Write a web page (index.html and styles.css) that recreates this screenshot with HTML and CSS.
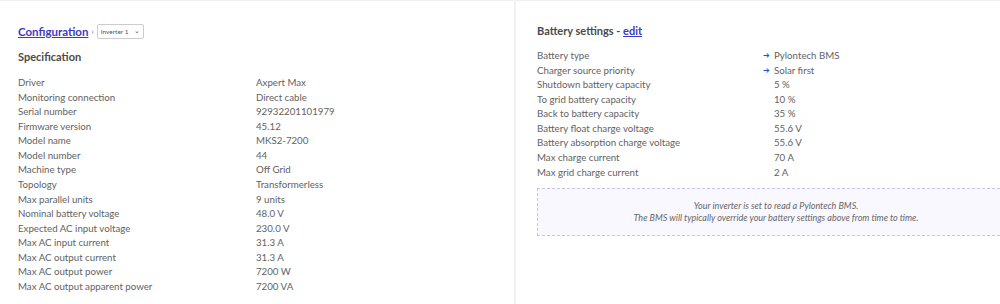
FILE: index.html
```html
<!DOCTYPE html>
<html lang="en">
<head>
    <meta charset="UTF-8">
    <title>Configuration</title>
    <link rel="stylesheet" href="styles.css">
</head>
<body>
    <div class="page">
        <!-- Left panel: inverter specification -->
        <section class="panel panel-left">
            <div class="crumbs">
                <a href="#" class="crumb-link">Configuration</a>
                <span class="crumb-sep">›</span>
                <div class="select">Inverter 1 <span class="caret">⌄</span></div>
            </div>
            <h2 class="panel-title">Specification</h2>
            <div class="spec-table">
                <div class="row"><span class="label">Driver</span><span class="value">Axpert Max</span></div>
                <div class="row"><span class="label">Monitoring connection</span><span class="value">Direct cable</span></div>
                <div class="row"><span class="label">Serial number</span><span class="value">92932201101979</span></div>
                <div class="row"><span class="label">Firmware version</span><span class="value">45.12</span></div>
                <div class="row"><span class="label">Model name</span><span class="value">MKS2-7200</span></div>
                <div class="row"><span class="label">Model number</span><span class="value">44</span></div>
                <div class="row"><span class="label">Machine type</span><span class="value">Off Grid</span></div>
                <div class="row"><span class="label">Topology</span><span class="value">Transformerless</span></div>
                <div class="row"><span class="label">Max parallel units</span><span class="value">9 units</span></div>
                <div class="row"><span class="label">Nominal battery voltage</span><span class="value">48.0 V</span></div>
                <div class="row"><span class="label">Expected AC input voltage</span><span class="value">230.0 V</span></div>
                <div class="row"><span class="label">Max AC input current</span><span class="value">31.3 A</span></div>
                <div class="row"><span class="label">Max AC output current</span><span class="value">31.3 A</span></div>
                <div class="row"><span class="label">Max AC output power</span><span class="value">7200 W</span></div>
                <div class="row"><span class="label">Max AC output apparent power</span><span class="value">7200 VA</span></div>
            </div>
        </section>

        <!-- Right panel: battery settings -->
        <section class="panel panel-right">
            <h2 class="panel-title top">Battery settings - <a href="#" class="edit-link">edit</a></h2>
            <div class="battery-table">
                <div class="row"><span class="label">Battery type</span><span class="arrow">➔</span><span class="value">Pylontech BMS</span></div>
                <div class="row"><span class="label">Charger source priority</span><span class="arrow">➔</span><span class="value">Solar first</span></div>
                <div class="row"><span class="label">Shutdown battery capacity</span><span class="arrow"></span><span class="value">5 %</span></div>
                <div class="row"><span class="label">To grid battery capacity</span><span class="arrow"></span><span class="value">10 %</span></div>
                <div class="row"><span class="label">Back to battery capacity</span><span class="arrow"></span><span class="value">35 %</span></div>
                <div class="row"><span class="label">Battery float charge voltage</span><span class="arrow"></span><span class="value">55.6 V</span></div>
                <div class="row"><span class="label">Battery absorption charge voltage</span><span class="arrow"></span><span class="value">55.6 V</span></div>
                <div class="row"><span class="label">Max charge current</span><span class="arrow"></span><span class="value">70 A</span></div>
                <div class="row"><span class="label">Max grid charge current</span><span class="arrow"></span><span class="value">2 A</span></div>
            </div>
            <div class="notice">
                <p>Your inverter is set to read a Pylontech BMS.</p>
                <p>The BMS will typically override your battery settings above from time to time.</p>
            </div>
        </section>
    </div>
</body>
</html>
```

FILE: styles.css
```css
/* Page */
html, body {
    margin: 0;
    height: 100%;
    overflow: hidden;
}

body {
    background: #f1f1f1;
    font-family: Lato, 'Noto Sans', sans-serif;
    color: #626262;
    font-size: 9.7px;
}

.page {
    display: grid;
    grid-template-columns: 514px 486px;
    column-gap: 2px;
    padding-top: 1px;
    height: 100%;
}

.panel {
    background: white;
    padding: 22px 18px 0;
    overflow: hidden;
}

.panel-right {
    padding-left: 21px;
    padding-right: 0;
}

/* Breadcrumb */
.crumbs {
    display: flex;
    align-items: center;
    height: 16px;
}

.crumb-link {
    color: #3a3ac4;
    font-weight: 700;
    font-size: 11.5px;
    text-decoration: underline;
}

.crumb-sep {
    font-size: 8px;
    color: #666;
    margin: 0 3px;
}

.select {
    border: 1px solid #ccc;
    border-radius: 2px;
    font-size: 6.5px;
    color: #555;
    padding: 2px 3px;
    height: 9px;
    line-height: 9px;
    display: flex;
    gap: 6px;
}

.caret {
    font-size: 7px;
    line-height: 6px;
}

/* Headings */
.panel-title {
    margin: 10px 0 10px;
    font-size: 11px;
    font-weight: 700;
    color: #4a4a4a;
    line-height: 16px;
}

.panel-title.top {
    margin: 0 0 9px;
}

.edit-link {
    color: #3a3ac4;
}

/* Tables */
.row {
    display: flex;
    height: 14.57px;
    line-height: 14.57px;
    white-space: nowrap;
}

.spec-table .label {
    width: 238px;
}

.battery-table .label {
    width: 226px;
}

.arrow {
    width: 11px;
    color: #2255dd;
    font-size: 8px;
}

/* Notice box */
.notice {
    margin-top: 9px;
    border: 1px dashed #c8c4ee;
    background: #f9f8ff;
    width: 476px;
    padding: 11px 60px 11px 0;
    text-align: center;
    font-style: italic;
    font-size: 9px;
    color: #666;
}

.notice p {
    margin: 0;
    line-height: 12px;
}
```
